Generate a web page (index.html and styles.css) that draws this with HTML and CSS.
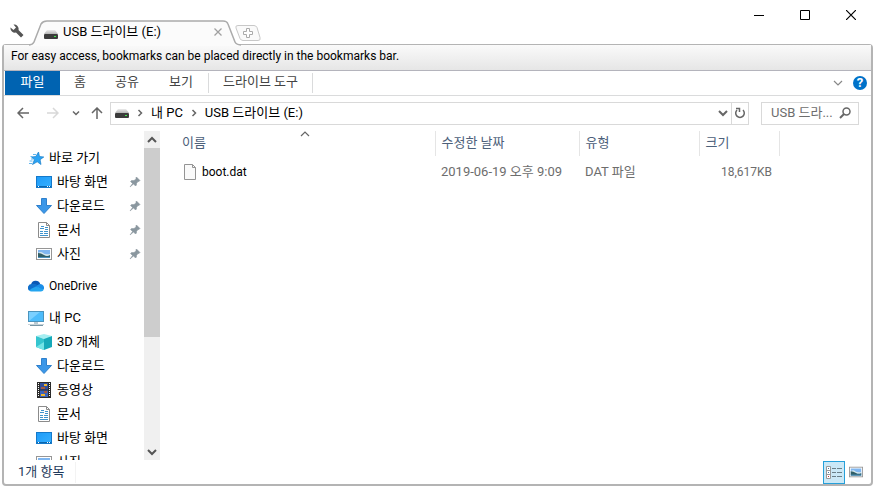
FILE: index.html
```
<!DOCTYPE html>
<html lang="ko">
<head>
    <meta charset="UTF-8">
    <meta name="viewport" content="width=device-width, initial-scale=1.0">
    <title>USB 드라이브 (E:)</title>
    <link rel="stylesheet" href="styles.css">
</head>
<body>
    <!-- Shared icons -->
    <svg class="icon-defs" width="0" height="0" aria-hidden="true">
        <defs>
            <linearGradient id="blue" x1="0" y1="0" x2="1" y2="1">
                <stop offset="0" stop-color="#1e9bf8"/>
                <stop offset="1" stop-color="#36b0ff"/>
            </linearGradient>
            <linearGradient id="metal" x1="0" y1="0" x2="0" y2="1">
                <stop offset="0" stop-color="#ececec"/>
                <stop offset="1" stop-color="#b4b4b4"/>
            </linearGradient>
        </defs>
        <symbol id="drive" viewBox="0 0 14 9">
            <path d="M3 0h8l3 4H0z" fill="url(#metal)"/>
            <rect y="4" width="14" height="5" rx="1" fill="#3c3c3c"/>
            <rect x="10" y="6" width="2" height="1" fill="#3ff04a"/>
        </symbol>
        <symbol id="star" viewBox="0 0 16 16">
            <path d="M10.500 2l1 4.500 4.300.500-3.700 2.700.900 4.800-3.800-2.700L4.500 14.500l1.900-4.700L3.500 7l4.300-.5z" fill="#2ba3f3" stroke="#1a7ec8" stroke-width=".7"/>
            <path d="M5 4.500h3M2.500 6.500h2M3 9h2M1.500 11h3M1 13.500h3" stroke="#62b6ee" stroke-width="1"/>
        </symbol>
        <symbol id="desktop" viewBox="0 0 16 16">
            <rect x=".5" y="2.500" width="15" height="11" fill="url(#blue)" stroke="#1479ca"/>
            <path d="M1 12.500h14" stroke="#0c66ad"/>
            <path d="M2 12.500h1M11 12.500h1M13 12.500h1" stroke="#fff"/>
        </symbol>
        <symbol id="download" viewBox="0 0 16 16">
            <path d="M5.500.500h5v7h5L8 15.500.500 7.500h5z" fill="#3b97e8" stroke="#2f80cc"/>
        </symbol>
        <symbol id="document" viewBox="0 0 16 16">
            <path d="M2.500.500h8l3 3v12h-11z" fill="#fff" stroke="#8b8b8b"/>
            <path d="M10.500.500v3h3" fill="none" stroke="#8b8b8b"/>
            <path d="M5 4.500h3M4 6.500h4M9 5.500h3M9 7.500h3M4 9.500h3M8 9.500h4M4 11.500h3M8 11.500h4M4 13.500h8" stroke="#3f93cc"/>
        </symbol>
        <symbol id="picture" viewBox="0 0 16 16">
            <rect x=".5" y="2.500" width="15" height="11" fill="#fff" stroke="#969696"/>
            <rect x="2" y="4" width="12" height="8" fill="#7fb6f0"/>
            <path d="M2 7q3-2 5 0t7 1v2H2z" fill="#d6e8ee"/>
            <path d="M2 7q3 0 6 2t6 0v3H2z" fill="#315f68"/>
            <path d="M2 11h12v1H2z" fill="#4a91bd"/>
        </symbol>
        <symbol id="cloud" viewBox="0 0 16 16">
            <path d="M3 6.500a4.800 4.800 0 0 1 9.200-.5L9 11z" fill="#0a58b5"/>
            <path d="M4 6a3.800 3.800 0 0 0-3 6.500L9 10l1-2.500A6 6 0 0 0 4 6z" fill="#106fcc"/>
            <path d="M8 8.500Q10 6 12.200 6a3.900 3.900 0 0 1 3.500 5.500L14 12z" fill="#1c8ee8"/>
            <path d="M1 12.500q3-2.500 7-4l7.700 3.200q-.8 1.800-2.700 1.800H3.500q-1.500 0-2.500-1z" fill="#24a5ef"/>
        </symbol>
        <symbol id="computer" viewBox="0 0 16 16">
            <rect x=".5" y="1.500" width="15" height="10" fill="#4dbcfb" stroke="#4b94bd"/>
            <path d="M1 11L12 2H1z" fill="#7bd0ff"/>
            <path d="M6 13h4M2 15.500h13" stroke="#7895a4"/>
            <path d="M0 14.500h16" stroke="#c5d2d9"/>
        </symbol>
        <symbol id="cube" viewBox="0 0 16 16">
            <path d="M8 3l8-1v11l-8 3z" fill="#16a9b9"/>
            <path d="M0 2l8-2 8 2-8 3z" fill="#a5eef1"/>
            <path d="M0 2l8 3v11l-8-3z" fill="#35c5cf"/>
            <path d="M0 13l8-5v8z" fill="#73e3e6"/>
        </symbol>
        <symbol id="video" viewBox="0 0 16 16">
            <rect x="1" y="0" width="14" height="16" fill="#2b2b2b"/>
            <path d="M2.500 1v14M13.500 1v14" stroke="#fff" stroke-dasharray="1 1"/>
            <rect x="4" y="1" width="8" height="6.500" fill="#314e9b"/>
            <rect x="4" y="8.500" width="8" height="6.500" fill="#3c64ba"/>
            <path d="M8 2h3v2H8zM5 12h4v2H5z" fill="#efb52d"/>
            <path d="M5 5h4v2H5zM8 9h3v2H8z" fill="#a45a42"/>
        </symbol>
        <symbol id="pin" viewBox="0 0 12 12">
            <path d="M7.500 1L11 4.500l-1 1H9L7.500 7.500V9l-1 1-2-2L1 11l2.500-3.500-2-2 1-1H5L7 3V1.500z" fill="#8a979f" stroke="#8a979f" stroke-width=".5"/>
        </symbol>
        <symbol id="chevron-right" viewBox="0 0 6 8">
            <path d="M1.500 1l3 3-3 3" fill="none" stroke="#666" stroke-width="1.500"/>
        </symbol>
        <symbol id="chevron-down" viewBox="0 0 10 8">
            <path d="M1 2l4 4 4-4" fill="none" stroke="currentColor" stroke-width="2"/>
        </symbol>
        <symbol id="chevron-thin" viewBox="0 0 10 8">
            <path d="M1 2l4 4 4-4" fill="none" stroke="currentColor" stroke-width="1.200"/>
        </symbol>
    </svg>

    <div class="window">
        <header class="titlebar">
            <button class="wrench" aria-label="설정">
                <svg width="14" height="14" viewBox="0 0 14 14"><path d="M3.500.500a4.500 4.500 0 0 1 5 5.500l5 5-2.500 2.500-5-5A4.500 4.500 0 0 1 .5 3.500L3.500 6 6 3.500z" fill="#555"/></svg>
            </button>
            <div class="tab">
                <svg class="tab-shape" width="212" height="26" viewBox="0 0 212 26">
                    <path d="M0 26Q4 25 5 22L12 4Q14 1 18 1H194Q198 1 199 4L206 22Q207 24.500 212 25V26z" fill="#fbfbfb"/>
                    <path d="M0 25Q4 24.500 5 22L12 4Q14 1 18 1H194Q198 1 199 4L206 22Q207 24.500 212 25" fill="none" stroke="#ababab" stroke-width="1.500"/>
                </svg>
                <svg class="tab-drive" width="14" height="9"><use href="#drive"/></svg>
                <span class="tab-title">USB 드라이브 (E:)</span>
                <button class="tab-close" aria-label="탭 닫기">
                    <svg width="8" height="8" viewBox="0 0 8 8"><path d="M.5.500l7 7M7.500.500l-7 7" stroke="#a0a0a0" stroke-width="1.300"/></svg>
                </button>
            </div>
            <button class="new-tab" aria-label="새 탭">
                <svg width="26" height="16" viewBox="0 0 26 16">
                    <path d="M3 .5h16q2 0 3 2l3 10q1 3-2 3H8q-2 0-3-2L1 3Q0 .500 3 .500z" fill="#fafafa" stroke="#c8c8c8"/>
                    <path d="M11.500 3.500h3v3h3v3h-3v3h-3v-3h-3v-3h3z" fill="#fff" stroke="#aaa"/>
                </svg>
            </button>
            <div class="window-buttons">
                <button aria-label="최소화"><svg width="10" height="10" viewBox="0 0 10 10"><path d="M0 5.500h10" stroke="#000"/></svg></button>
                <button aria-label="최대화"><svg width="10" height="10" viewBox="0 0 10 10"><path d="M.5.500h9v9h-9z" fill="none" stroke="#000"/></svg></button>
                <button aria-label="닫기"><svg width="10" height="10" viewBox="0 0 10 10"><path d="M0 0l10 10M10 0L0 10" stroke="#000" stroke-width="1.200"/></svg></button>
            </div>
        </header>

        <div class="frame">
            <div class="bookmarks">For easy access, bookmarks can be placed directly in the bookmarks bar.</div>

            <div class="ribbon">
                <button class="ribbon-file">파일</button>
                <button class="ribbon-tab home">홈</button>
                <button class="ribbon-tab">공유</button>
                <button class="ribbon-tab view">보기</button>
                <button class="ribbon-tab tools">드라이브 도구</button>
                <button class="ribbon-toggle" aria-label="리본 확장"><svg width="10" height="8"><use href="#chevron-thin"/></svg></button>
                <button class="help" aria-label="도움말">?</button>
            </div>

            <div class="navbar">
                <button class="nav-back" aria-label="뒤로"><svg width="12" height="12" viewBox="0 0 12 12"><path d="M12 6H1M6 1L1 6l5 5" fill="none" stroke="#666" stroke-width="1.500"/></svg></button>
                <button class="nav-forward" aria-label="앞으로"><svg width="12" height="12" viewBox="0 0 12 12"><path d="M0 6h11M6 1l5 5-5 5" fill="none" stroke="#d8d8d8" stroke-width="1.500"/></svg></button>
                <button class="nav-recent" aria-label="최근 위치"><svg width="8" height="6"><use href="#chevron-down"/></svg></button>
                <button class="nav-up" aria-label="위로"><svg width="12" height="12" viewBox="0 0 12 12"><path d="M6 12V1M1 6l5-5 5 5" fill="none" stroke="#666" stroke-width="1.500"/></svg></button>
                <nav class="address">
                    <svg width="14" height="9"><use href="#drive"/></svg>
                    <svg class="crumb-arrow" width="6" height="8"><use href="#chevron-right"/></svg>
                    <a href="#">내 PC</a>
                    <svg class="crumb-arrow" width="6" height="8"><use href="#chevron-right"/></svg>
                    <a href="#">USB 드라이브 (E:)</a>
                    <button class="address-drop" aria-label="이전 위치"><svg width="10" height="8"><use href="#chevron-down"/></svg></button>
                    <button class="refresh" aria-label="새로 고침"><svg width="12" height="12" viewBox="0 0 12 12"><path d="M3 3A4.300 4.300 0 1 0 9 3" fill="none" stroke="#666" stroke-width="1.500"/><path d="M2 1.500h3.500V5" fill="none" stroke="#666" stroke-width="1.500"/></svg></button>
                </nav>
                <label class="search">
                    <input type="text" placeholder="USB 드라..." aria-label="검색">
                    <svg width="12" height="12" viewBox="0 0 12 12"><circle cx="7.500" cy="4.500" r="3.500" fill="none" stroke="#666" stroke-width="1.500"/><path d="M5 7L1 11" stroke="#666" stroke-width="2"/></svg>
                </label>
            </div>

            <div class="content">
                <aside class="sidebar">
                    <ul class="tree">
                        <li class="root"><svg width="16" height="16"><use href="#star"/></svg><a href="#">바로 가기</a></li>
                        <li><svg width="16" height="16"><use href="#desktop"/></svg><a href="#">바탕 화면</a><svg class="pin" width="12" height="12"><use href="#pin"/></svg></li>
                        <li><svg width="16" height="16"><use href="#download"/></svg><a href="#">다운로드</a><svg class="pin" width="12" height="12"><use href="#pin"/></svg></li>
                        <li><svg width="16" height="16"><use href="#document"/></svg><a href="#">문서</a><svg class="pin" width="12" height="12"><use href="#pin"/></svg></li>
                        <li><svg width="16" height="16"><use href="#picture"/></svg><a href="#">사진</a><svg class="pin" width="12" height="12"><use href="#pin"/></svg></li>
                    </ul>
                    <ul class="tree">
                        <li class="root"><svg width="16" height="16"><use href="#cloud"/></svg><a class="latin" href="#">OneDrive</a></li>
                    </ul>
                    <ul class="tree">
                        <li class="root"><svg width="16" height="16"><use href="#computer"/></svg><a href="#">내 PC</a></li>
                        <li><svg width="16" height="16"><use href="#cube"/></svg><a href="#">3D 개체</a></li>
                        <li><svg width="16" height="16"><use href="#download"/></svg><a href="#">다운로드</a></li>
                        <li><svg width="16" height="16"><use href="#video"/></svg><a href="#">동영상</a></li>
                        <li><svg width="16" height="16"><use href="#document"/></svg><a href="#">문서</a></li>
                        <li><svg width="16" height="16"><use href="#desktop"/></svg><a href="#">바탕 화면</a></li>
                        <li><svg width="16" height="16"><use href="#picture"/></svg><a href="#">사진</a></li>
                    </ul>
                </aside>
                <div class="scrollbar">
                    <button class="scroll-up" aria-label="위로 스크롤"><svg width="10" height="8"><use href="#chevron-down"/></svg></button>
                    <div class="scroll-track"><div class="scroll-thumb"></div></div>
                    <button aria-label="아래로 스크롤"><svg width="10" height="8"><use href="#chevron-down"/></svg></button>
                </div>
                <main class="files">
                    <table>
                        <thead>
                            <tr>
                                <th class="col-name">이름<svg class="sort" width="10" height="8"><use href="#chevron-thin"/></svg></th>
                                <th class="col-date">수정한 날짜</th>
                                <th class="col-type">유형</th>
                                <th class="col-size">크기</th>
                            </tr>
                        </thead>
                        <tbody>
                            <tr>
                                <td class="name">
                                    <div class="file">
                                        <svg width="12" height="16" viewBox="0 0 12 16"><path d="M.5.500h8l3 3v12H.5z" fill="#fafafa" stroke="#949494"/><path d="M8.500.500v3h3" fill="none" stroke="#949494"/></svg>
                                        <a class="latin" href="#">boot.dat</a>
                                    </div>
                                </td>
                                <td>2019-06-19 오후 9:09</td>
                                <td>DAT 파일</td>
                                <td class="size latin">18,617KB</td>
                            </tr>
                        </tbody>
                    </table>
                </main>
            </div>

            <footer class="status">
                <span class="count">1개 항목</span>
                <div class="views">
                    <button class="view-btn active" aria-label="자세히">
                        <svg width="16" height="13" viewBox="0 0 16 13">
                            <path d="M.5.500h4v12h-4zM.5 4.500h4M.5 8.500h4" fill="#fff" stroke="#999"/>
                            <path d="M2 2.500h1M2 6.500h1" stroke="#4778a8"/>
                            <path d="M2 10.500h1" stroke="#c33"/>
                            <path d="M6 2.500h4M11 2.500h5M6 6.500h4M11 6.500h5M6 10.500h4M11 10.500h5" stroke="#6b7f88"/>
                        </svg>
                    </button>
                    <button class="view-btn" aria-label="큰 아이콘"><svg width="14" height="14"><use href="#picture"/></svg></button>
                </div>
            </footer>
        </div>
    </div>
</body>
</html>
```
FILE: styles.css
```
* {
    box-sizing: border-box;
}
body {
    margin: 0;
    background: #fff;
    color: #000;
    font-family: Roboto, "Noto Sans CJK KR", sans-serif;
    font-size: 13px;
    line-height: 20px;
}
button {
    display: flex;
    align-items: center;
    justify-content: center;
    margin: 0;
    padding: 0;
    border: none;
    background: transparent;
    color: inherit;
    font: inherit;
}
a {
    color: inherit;
    text-decoration: none;
}
svg {
    display: block;
    flex: none;
}
.icon-defs {
    position: absolute;
}
.latin {
    font-size: 12px;
}
.window {
    display: flex;
    flex-direction: column;
    height: 100vh;
    padding: 0 2px 1px;
}

/* Title bar */
.titlebar {
    display: flex;
    align-items: flex-end;
    height: 44px;
    flex: none;
}
.wrench {
    width: 14px;
    height: 14px;
    margin: 0 5px 6px 8px;
}
.tab {
    position: relative; /* Anchor for the tab outline */
    z-index: 1;
    display: flex;
    align-items: center;
    width: 212px;
    height: 26px;
    margin-bottom: -2px;
    padding: 0 19px 2px 15px;
}
.tab-shape {
    position: absolute;
    left: 0;
    top: 0;
    z-index: -1;
}
.tab-drive {
    margin-top: 4px;
}
.tab-title {
    flex: 1;
    margin-left: 5px;
}
.new-tab {
    margin: 0 0 3px -6px;
}
.window-buttons {
    display: flex;
    align-self: flex-start;
    margin: 0 -1px 0 auto;
}
.window-buttons button {
    width: 46px;
    height: 30px;
}

/* Window frame */
.frame {
    display: flex;
    flex: 1;
    flex-direction: column;
    min-height: 0;
    border: 2px solid #b4b4b4;
    border-top-width: 1px;
    border-radius: 4px;
}
.bookmarks {
    height: 26px;
    flex: none;
    padding: 1px 7px;
    border-bottom: 1px solid #b4b4bc;
    background: linear-gradient(#fafafa, #e6e6e6);
    font-size: 12px;
}

/* Ribbon */
.ribbon {
    display: flex;
    align-items: center;
    height: 25px;
    flex: none;
    padding: 0 4px 0 1px;
    border-bottom: 1px solid #dadbdc;
    color: #444;
}
.ribbon-file {
    width: 55px;
    height: 24px;
    padding-bottom: 2px;
    background: #0063b1;
    color: #fff;
}
.ribbon-tab {
    width: 54px;
    height: 20px;
    padding-bottom: 2px;
}
.home {
    width: 40px;
}
.view {
    width: 55px;
    border-right: 1px solid #dadbdc;
}
.tools {
    width: 104px;
    border-right: 1px solid #dadbdc;
}
.ribbon-toggle {
    margin-left: auto;
    color: #888;
}
.help {
    width: 14px;
    height: 14px;
    margin-left: 10px;
    border-radius: 50%;
    background: #0072c9;
    color: #fff;
    font-weight: bold;
    line-height: 14px;
}

/* Address row */
.navbar {
    display: flex;
    align-items: center;
    height: 35px;
    flex: none;
    padding: 0 12px 1px 13px;
    color: #666;
}
.nav-forward {
    margin-left: 18px;
}
.nav-recent {
    margin-left: 13px;
}
.nav-up {
    margin: 0 7px 0 11px;
}
.address {
    display: flex;
    flex: 1;
    align-items: center;
    height: 23px;
    padding-left: 4px;
    border: 1px solid #d9d9d9;
    color: #000;
}
.crumb-arrow {
    margin: 0 8px;
}
.address-drop {
    width: 16px;
    height: 21px;
    margin-left: auto;
    color: #666;
}
.refresh {
    width: 17px;
    height: 21px;
    border-left: 1px solid #d9d9d9;
}
.search {
    display: flex;
    align-items: center;
    width: 98px;
    height: 23px;
    margin-left: 12px;
    padding: 0 7px 0 9px;
    border: 1px solid #d9d9d9;
}
.search input {
    flex: 1;
    min-width: 0;
    padding: 0;
    border: none;
    outline: none;
    background: transparent;
    font: inherit;
}
.search input::placeholder {
    color: #6d6d6d;
    opacity: 1;
}

/* Content */
.content {
    display: flex;
    flex: 1;
    min-height: 0;
}
.sidebar {
    width: 140px;
    padding-top: 15px;
    overflow: hidden;
}
.tree {
    margin: 0 0 8px;
    padding: 0;
    list-style: none;
}
.tree li {
    display: flex;
    align-items: center;
    gap: 5px;
    height: 24px;
    padding: 0 3px 0 32px;
}
.tree .root {
    padding-left: 24px;
}
.pin {
    margin-left: auto;
}
.scrollbar {
    display: flex;
    flex-direction: column;
    width: 16px;
    background: #f0f0f0;
    color: #555;
}
.scrollbar button {
    height: 17px;
}
.scroll-up svg {
    transform: rotate(180deg);
}
.scroll-track {
    flex: 1;
}
.scroll-thumb {
    height: 64%;
    background: #cdcdcd;
}
.files {
    flex: 1;
    margin-left: 1px;
}
table {
    border-collapse: collapse;
    table-layout: fixed;
}
th {
    position: relative;
    height: 25px;
    padding: 0 0 2px 6px;
    border-right: 1px solid #e5e5e5;
    color: #4c607a;
    font-weight: normal;
    text-align: left;
}
.col-name {
    width: 274px;
    padding-left: 21px;
}
.col-date {
    width: 144px;
}
.col-type {
    width: 120px;
}
.col-size {
    width: 80px;
}
.sort {
    position: absolute; /* Sits on the top edge of the header */
    top: -1px;
    left: 139px;
    color: #666;
    transform: rotate(180deg);
}
td {
    padding: 6px 0 0 6px;
    color: #6d6d6d;
}
td.name {
    padding-left: 23px;
    color: #000;
}
td.size {
    padding-right: 7px;
    text-align: right;
}
.file {
    display: flex;
    align-items: center;
    gap: 6px;
}

/* Status bar */
.status {
    display: flex;
    align-items: center;
    height: 24px;
    flex: none;
    padding: 0 4px 0 14px;
    color: #1e395b;
}
.count {
    padding: 0 11px 1px 0;
    border-right: 1px solid #f3f3f3;
}
.views {
    display: flex;
    margin-left: auto;
}
.view-btn {
    width: 22px;
    height: 23px;
    border: 1px solid transparent;
}
.view-btn.active {
    border-color: #26a0da;
    background: #cbe8f6;
}
```
